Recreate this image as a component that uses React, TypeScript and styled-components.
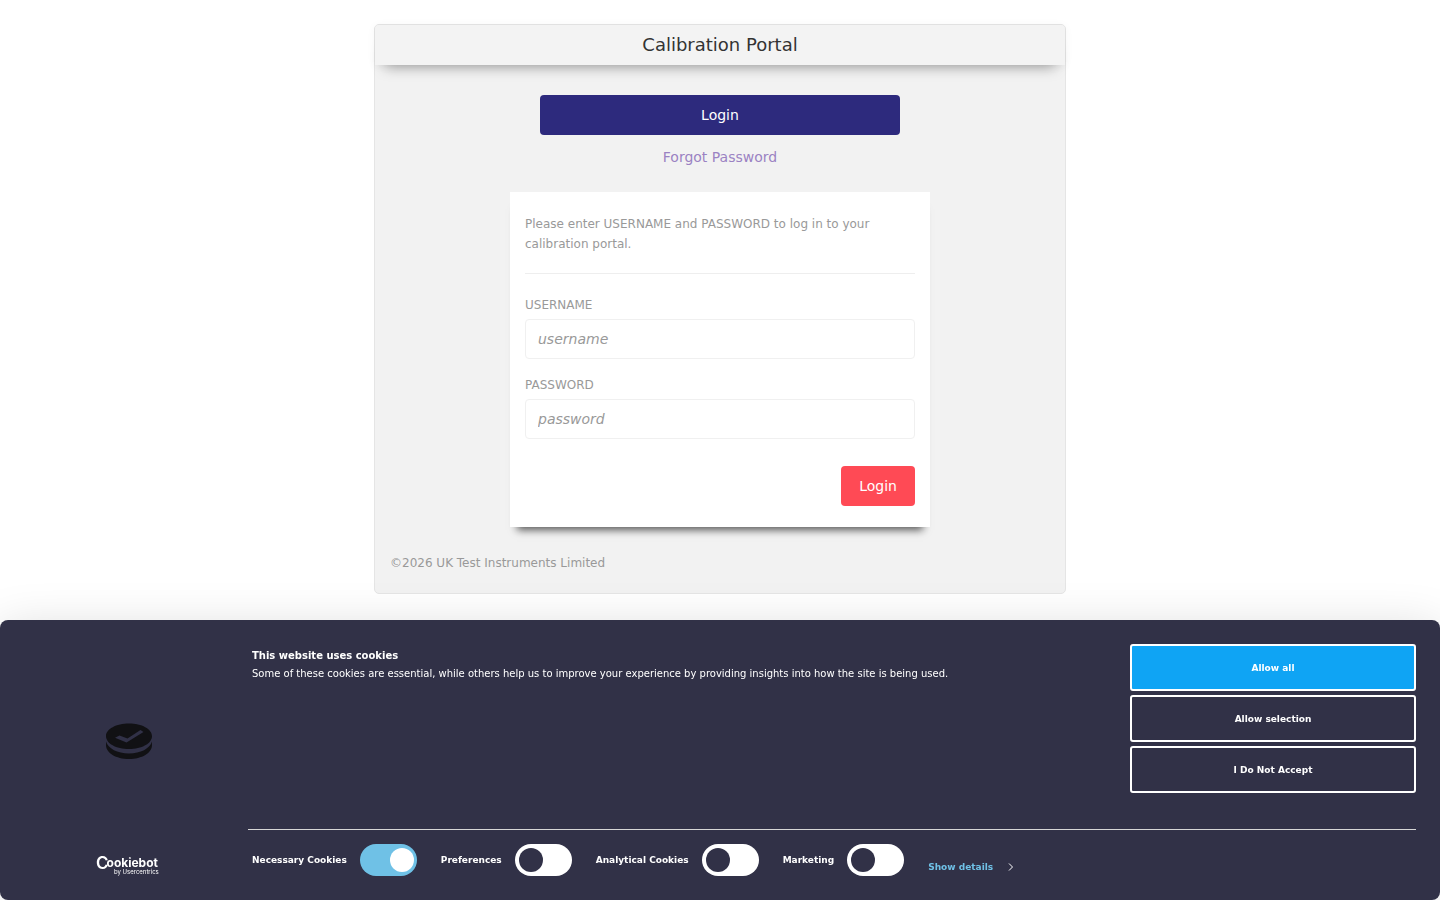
import React from "react";
import styled, { createGlobalStyle } from "styled-components";

const GlobalStyle = createGlobalStyle`
  *, *::before, *::after { box-sizing: border-box; }
  body {
    margin: 0;
    background: #fff;
    color: #999;
    font-family: "DejaVu Sans", Verdana, sans-serif;
    font-size: 14px;
    line-height: 20px;
  }
  button, input { font: inherit; }
`;

const Page = styled.main`
  padding: 24px 16px 320px;
`;

const Card = styled.section`
  max-width: 692px;
  margin: 0 auto;
  background: #f2f2f2;
  border: 1px solid #e5e5e5;
  border-radius: 5px;
`;

const CardHeader = styled.header`
  padding: 10px 16px;
  background: #f3f3f3;
  border-radius: 4px 4px 0 0;
  box-shadow: 0 12px 14px -10px rgba(0, 0, 0, 0.35), 0 1px 10px rgba(0, 0, 0, 0.05);
`;

const Title = styled.h1`
  margin: 0;
  color: #333;
  font-size: 18px;
  font-weight: 400;
  line-height: 20px;
  text-align: center;
`;

const Actions = styled.nav`
  display: flex;
  flex-direction: column;
  gap: 12px;
  max-width: 360px;
  margin: 30px auto 25px;
  text-align: center;
`;

const LoginTab = styled.button`
  height: 40px;
  border: 0;
  border-radius: 4px;
  background: #2d2a7d;
  color: #fff;
`;

const ForgotLink = styled.a`
  color: #9b82c3;
  text-decoration: none;
`;

const Panel = styled.form`
  display: flex;
  flex-direction: column;
  max-width: 420px;
  margin: 0 auto;
  padding: 22px 15px 21px;
  background: #fff;
  box-shadow: 0 10px 8px -7px rgba(0, 0, 0, 0.65);
`;

const Intro = styled.p`
  margin: 0 0 21px;
  padding-bottom: 19px;
  border-bottom: 1px solid #eee;
  font-size: 12px;
`;

const Field = styled.div`
  display: flex;
  flex-direction: column;
  gap: 4px;
  margin-bottom: 16px;
`;

const FieldLabel = styled.label`
  font-size: 12px;
  text-transform: uppercase;
`;

const TextInput = styled.input`
  width: 100%;
  height: 40px;
  padding: 0 12px;
  border: 1px solid #f0f0f0;
  border-radius: 4px;
  background: #fff;
  color: #555;
  &::placeholder { color: #999; font-style: italic; opacity: 1; }
`;

const SubmitButton = styled.button`
  align-self: flex-end;
  height: 40px;
  margin-top: 11px;
  padding: 0 18px;
  border: 0;
  border-radius: 4px;
  background: #ff4a55;
  color: #fff;
`;

const CardFooter = styled.footer`
  padding: 26px 15px 20px;
  font-size: 12px;
`;

const Banner = styled.aside`
  position: fixed;
  right: 0;
  bottom: 0;
  left: 0;
  display: grid;
  grid-template-columns: 224px 1fr;
  column-gap: 24px;
  min-height: 280px;
  padding: 24px 24px 24px 0;
  border-radius: 8px;
  background: #313147;
  box-shadow: 0 8px 48px rgba(0, 0, 0, 0.15);
  color: #fff;
  font-size: 9px;
  line-height: 18px;
`;

const Brand = styled.div`
  display: flex;
  flex-direction: column;
  align-items: center;
  justify-content: space-between;
  padding: 79px 0 0 34px;
`;

const BrandLink = styled.a`
  display: block;
  color: #fff;
  line-height: 0;
`;

const BannerBody = styled.div`
  display: flex;
  flex-direction: column;
  justify-content: space-between;
`;

const Notice = styled.div`
  display: flex;
  justify-content: space-between;
  gap: 24px;
`;

const NoticeText = styled.div`
  padding: 3px 4px;
  font-size: 10px;
`;

const NoticeTitle = styled.h2`
  margin: 0;
  font-size: inherit;
  font-weight: 700;
`;

const NoticeCopy = styled.p`
  margin: 0;
`;

const Choices = styled.div`
  display: flex;
  flex-direction: column;
  flex: none;
  gap: 4px;
  width: 286px;
`;

const ChoiceButton = styled.button<{ $primary?: boolean }>`
  height: 47px;
  border: 2px solid #fff;
  border-radius: 3px;
  background: ${(p) => (p.$primary ? "#0fa4f4" : "transparent")};
  color: #fff;
  font-weight: 700;
`;

const Consents = styled.div`
  display: flex;
  align-items: center;
  gap: 24px;
  padding: 14px 4px 0;
  border-top: 1px solid #d6d6d6;
  font-weight: 700;
`;

const Consent = styled.label`
  display: flex;
  align-items: center;
  gap: 13px;
`;

const Toggle = styled.input`
  appearance: none;
  display: flex;
  align-items: center;
  width: 57px;
  height: 32px;
  margin: 0;
  padding: 0 4px;
  border-radius: 16px;
  background: #fff;
  &::before {
    content: "";
    width: 24px;
    height: 24px;
    border-radius: 50%;
    background: #313147;
  }
  &:checked { justify-content: flex-end; padding: 0 3px; background: #6fc1e6; }
  &:checked::before { background: #fff; }
`;

const DetailsLink = styled.a`
  display: flex;
  align-items: center;
  gap: 14px;
  padding-top: 14px;
  color: #6fc1e6;
  text-decoration: none;
`;

const CookieIcon = () => (
  <svg width="46" height="36" viewBox="0 0 46 36" aria-hidden="true">
    <path fill="#111114" fillRule="evenodd" d="M23 .5C35.700 .5 46 6 46 13.200S35.700 26 23 26 0 20.400 0 13.200 10.300 .5 23 .5ZM34.500 7 21.500 15.500 13.500 12.500 9 14.700 20.500 19.500 37.500 9Z" />
    <path fill="#111114" d="M0 18.500C2 25.500 11.500 30.500 23 30.500S44 25.500 46 18.500V22C46 30 36 36 23 36S0 30 0 22Z" />
  </svg>
);

const Wordmark = () => (
  <svg width="66" height="22" viewBox="0 0 66 22" role="img" aria-label="Cookiebot by Usercentrics">
    <g fill="currentColor" fontFamily="Inter, sans-serif">
      <text x="0" y="13" fontSize="12" fontWeight="700">
        <tspan fontSize="17" fontWeight="600" dy="2">C</tspan>
        <tspan dx="-2" dy="-2">ookiebot</tspan>
      </text>
      <text x="18" y="20" fontSize="6">by Usercentrics</text>
    </g>
  </svg>
);

const consents = [
  { id: "necessary", label: "Necessary Cookies", on: true },
  { id: "preferences", label: "Preferences", on: false },
  { id: "analytical", label: "Analytical Cookies", on: false },
  { id: "marketing", label: "Marketing", on: false },
];

export default function App() {
  return (
    <>
      <GlobalStyle />
      <Page>
        <Card>
          <CardHeader>
            <Title>Calibration Portal</Title>
          </CardHeader>
          <Actions>
            <LoginTab type="button">Login</LoginTab>
            <ForgotLink href="#forgot">Forgot Password</ForgotLink>
          </Actions>
          <Panel onSubmit={(e: React.FormEvent) => e.preventDefault()}>
            <Intro>Please enter USERNAME and PASSWORD to log in to your calibration portal.</Intro>
            <Field>
              <FieldLabel htmlFor="username">Username</FieldLabel>
              <TextInput id="username" type="text" placeholder="username" />
            </Field>
            <Field>
              <FieldLabel htmlFor="password">Password</FieldLabel>
              <TextInput id="password" type="password" placeholder="password" />
            </Field>
            <SubmitButton type="submit">Login</SubmitButton>
          </Panel>
          <CardFooter>©2026 UK Test Instruments Limited</CardFooter>
        </Card>
      </Page>
      <Banner aria-label="Cookie consent">
        <Brand>
          <CookieIcon />
          <BrandLink href="#cookiebot">
            <Wordmark />
          </BrandLink>
        </Brand>
        <BannerBody>
          <Notice>
            <NoticeText>
              <NoticeTitle>This website uses cookies</NoticeTitle>
              <NoticeCopy>
                Some of these cookies are essential, while others help us to improve your experience by providing
                insights into how the site is being used.
              </NoticeCopy>
            </NoticeText>
            <Choices>
              <ChoiceButton type="button" $primary>Allow all</ChoiceButton>
              <ChoiceButton type="button">Allow selection</ChoiceButton>
              <ChoiceButton type="button">I Do Not Accept</ChoiceButton>
            </Choices>
          </Notice>
          <Consents>
            {consents.map((c) => (
              <Consent key={c.id} htmlFor={c.id}>
                {c.label}
                <Toggle id={c.id} type="checkbox" defaultChecked={c.on} />
              </Consent>
            ))}
            <DetailsLink href="#details">
              Show details
              <svg width="8" height="8" viewBox="0 0 8 8" fill="none" stroke="#fff" aria-hidden="true">
                <path d="M2 .5 5.500 4 2 7.500" />
              </svg>
            </DetailsLink>
          </Consents>
        </BannerBody>
      </Banner>
    </>
  );
}
